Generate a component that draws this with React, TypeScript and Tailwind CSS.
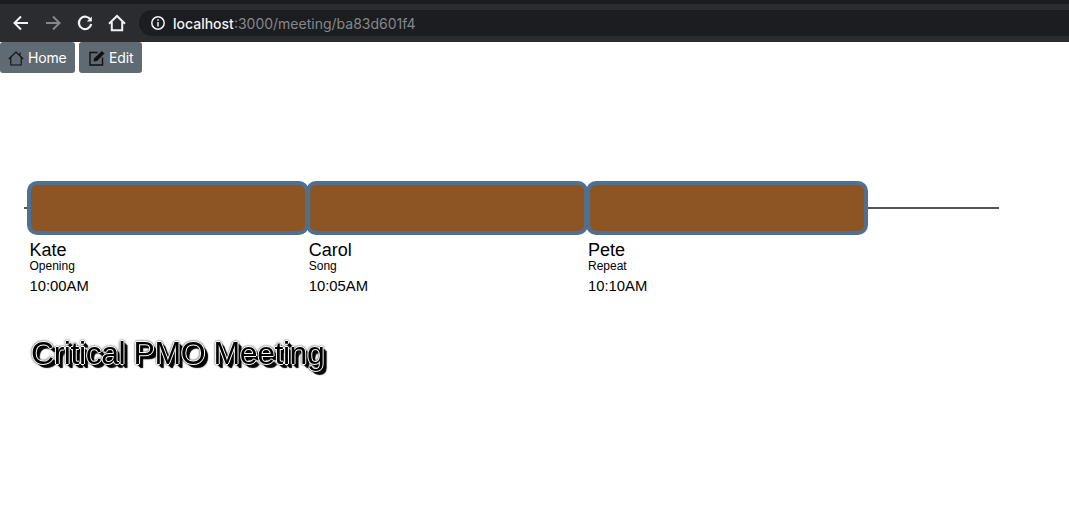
import React from "react";

const sans = "font-['Liberation_Sans',Arial,sans-serif]";

const slots = [
  { name: "Kate", part: "Opening", time: "10:00AM" },
  { name: "Carol", part: "Song", time: "10:05AM" },
  { name: "Pete", part: "Repeat", time: "10:10AM" },
];

function BrowserBar() {
  return (
    <div className="h-[42px] bg-[#2b2c30] border-t-[4px] border-[#1b1c1f] flex items-center font-['Inter',sans-serif]">
      <div className="flex items-center w-[139px] shrink-0 pl-[12px]">
        <svg width="18" height="18" viewBox="0 0 18 18" fill="none" stroke="#f1f2f3" strokeWidth="2">
          <path d="M16 9H3M9 2.5 2.5 9 9 15.5" />
        </svg>
        <svg className="ml-[14px]" width="18" height="18" viewBox="0 0 18 18" fill="none" stroke="#85878a" strokeWidth="2">
          <path d="M2 9h13M9 2.5 15.5 9 9 15.5" />
        </svg>
        <svg className="ml-[14px]" width="18" height="18" viewBox="0 0 18 18" fill="none" stroke="#f1f2f3" strokeWidth="2.2">
          <path d="M14.6 6A6.2 6.2 0 1 0 15.2 10" />
          <path d="M15.8 2.4v5h-5" fill="#f1f2f3" stroke="none" />
        </svg>
        <svg className="ml-[14px]" width="18" height="18" viewBox="0 0 18 18" fill="none" stroke="#f1f2f3" strokeWidth="2">
          <path d="M1 9.7 9 2l8 7.7M3.8 8v8.2h10.4V8" />
        </svg>
      </div>
      <div className="flex-1 h-[26px] bg-[#1c1d20] rounded-l-full flex items-center pl-[11px] text-[14px] font-medium">
        <svg width="16" height="16" viewBox="0 0 16 16" fill="none" stroke="#f1f2f3" strokeWidth="1.5">
          <circle cx="8" cy="8" r="6.2" />
          <path d="M8 7v4.4M8 4.3v1.5" />
        </svg>
        <span className="ml-[7px] text-[#f1f2f3]">localhost</span>
        <span className="text-[#85878a] font-normal">:3000/meeting/ba83d601f4</span>
      </div>
    </div>
  );
}

function ToolButton({ icon, label, className }: { icon: React.ReactNode; label: string; className: string }) {
  return (
    <button className={`h-[31px] bg-[#5f6a72] rounded-[3px] flex items-center gap-[4px] text-white text-[14px] tracking-[-0.15px] font-['Inter',sans-serif] ${className}`}>
      {icon}
      {label}
    </button>
  );
}

export default function App() {
  return (
    <div className="w-[1069px] h-[525px] bg-white overflow-hidden">
      <BrowserBar />
      <div className="flex gap-[4px]">
        <ToolButton
          label="Home"
          className="w-[75px] pl-[8px]"
          icon={
            <svg width="16" height="16" viewBox="0 0 16 16" fill="none" stroke="#111" strokeWidth="1.1">
              <path d="M.8 9 8 2l7.2 7M2.8 7.5V15h10.4V7.5M12 2.5v2.6" />
            </svg>
          }
        />
        <ToolButton
          label="Edit"
          className="w-[63px] pl-[10px] gap-[3px]"
          icon={
            <svg width="16" height="16" viewBox="0 0 16 16" fill="none" stroke="#111" strokeWidth="1.4">
              <path d="M8.5 2.5H1v12.5h12.5V7.5" />
              <path d="M4.5 11.5 5.2 8.3 12.8 1l2.7 2.6L8 11z" fill="#111" stroke="none" />
            </svg>
          }
        />
      </div>

      <div className={`relative mt-[108px] ml-[24px] w-[975px] ${sans}`}>
        <div className="absolute left-0 right-0 top-[26px] h-[2px] bg-[#555]" />
        <div className="relative flex pl-[3px]">
          {slots.map((s) => (
            <div key={s.name} className="w-[279.25px]">
              <div className="w-[282px] h-[54px] bg-[#8d5524] border-[4px] border-[#4f7090] rounded-[10px]" />
              <div className="pl-[2.5px] text-black">
                <div className="text-[18px] leading-[20px] mt-[5px]">{s.name}</div>
                <div className="text-[12px] leading-[13px]">{s.part}</div>
                <div className="text-[14.8px] leading-[18px] mt-[4px]">{s.time}</div>
              </div>
            </div>
          ))}
        </div>
      </div>

      <h1 className={`mt-[40px] ml-[31px] text-[32px] leading-[37px] tracking-[-0.45px] text-black opacity-[0.999] [will-change:transform] [text-shadow:1px_0_0.5px_#fff,-1px_0_0.5px_#fff,0_1px_0.5px_#fff,0_-1px_0.5px_#fff,0_0_3px_#000,0_0_3px_#000,2px_2px_1px_#000,3px_3px_1px_#000,4px_4px_1px_#000] ${sans}`}>
        Critical PMO Meeting
      </h1>
    </div>
  );
}
